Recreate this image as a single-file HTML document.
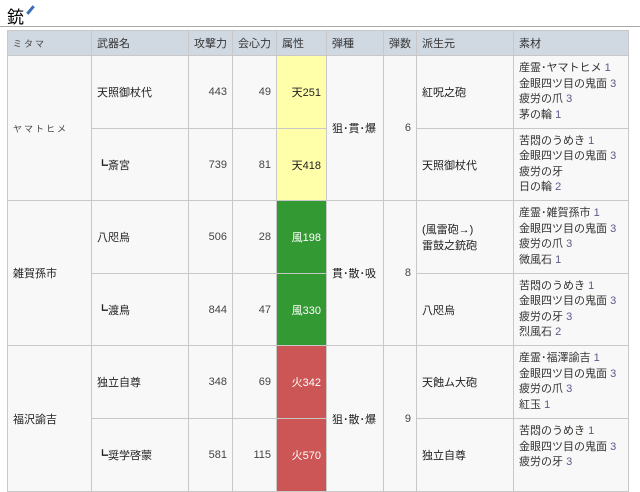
<!DOCTYPE html>
<html><head><meta charset="utf-8"><style>
body{margin:0;background:#fff;font-family:"Liberation Sans","Noto Sans CJK JP",sans-serif;color:#222;width:640px;height:492px;overflow:hidden;position:relative}
h2{position:absolute;left:7px;top:3px;margin:0;font-size:17px;font-weight:normal;color:#000}
.pen{position:absolute;left:29px;top:5px;width:3px;height:10px;background:#3a6fb5;transform:rotate(40deg)}
.hr{position:absolute;left:0;top:26px;width:640px;height:1px;background:#aaa}
table{position:absolute;left:7px;top:30px;border-collapse:collapse;table-layout:fixed;font-size:11px}
td,th{border:1px solid #c8c8c8;background:#f8f8f8;padding:0 5px;vertical-align:middle;overflow:hidden;white-space:nowrap}
th{background:#d0d8e2;font-weight:normal;text-align:left;height:24px;color:#333}
.n{text-align:right;color:#444}
.y{background:#ffffaa;text-align:right}
.g{background:#339933;color:#fff;text-align:right}
.r{background:#cc5555;color:#fff;text-align:right}
.m{line-height:15.5px;font-size:11px;color:#333}
.m b{font-weight:normal;color:#5a5a8a}
.s{font-size:9px;letter-spacing:2px;color:#444}
</style></head><body>
<h2>銃</h2><div class="pen"></div><div class="hr"></div>
<table>
<colgroup><col style="width:84px"><col style="width:97px"><col style="width:44px"><col style="width:44px"><col style="width:50px"><col style="width:57px"><col style="width:30px"><col style="width:97px"><col style="width:115px"></colgroup>
<tr><th class="s">ミタマ</th><th>武器名</th><th>攻撃力</th><th>会心力</th><th>属性</th><th>弾種</th><th>弾数</th><th>派生元</th><th>素材</th></tr>
<tr style="height:73px"><td rowspan="2" class="s">ヤマトヒメ</td><td>天照御杖代</td><td class="n">443</td><td class="n">49</td><td class="y">天251</td><td rowspan="2">狙･貫･爆</td><td rowspan="2" class="n">6</td><td>紅呪之砲</td><td class="m">産霊･ヤマトヒメ <b>1</b><br>金眼四ツ目の鬼面 <b>3</b><br>疲労の爪 <b>3</b><br>茅の輪 <b>1</b></td></tr>
<tr style="height:72px"><td>┗斎宮</td><td class="n">739</td><td class="n">81</td><td class="y">天418</td><td>天照御杖代</td><td class="m">苦悶のうめき <b>1</b><br>金眼四ツ目の鬼面 <b>3</b><br>疲労の牙<br>日の輪 <b>2</b></td></tr>
<tr style="height:73px"><td rowspan="2">雑賀孫市</td><td>八咫烏</td><td class="n">506</td><td class="n">28</td><td class="g">風198</td><td rowspan="2">貫･散･吸</td><td rowspan="2" class="n">8</td><td>(風雷砲→)<br>雷鼓之銃砲</td><td class="m">産霊･雑賀孫市 <b>1</b><br>金眼四ツ目の鬼面 <b>3</b><br>疲労の爪 <b>3</b><br>微風石 <b>1</b></td></tr>
<tr style="height:72px"><td>┗渡鳥</td><td class="n">844</td><td class="n">47</td><td class="g">風330</td><td>八咫烏</td><td class="m">苦悶のうめき <b>1</b><br>金眼四ツ目の鬼面 <b>3</b><br>疲労の牙 <b>3</b><br>烈風石 <b>2</b></td></tr>
<tr style="height:73px"><td rowspan="2">福沢諭吉</td><td>独立自尊</td><td class="n">348</td><td class="n">69</td><td class="r">火342</td><td rowspan="2">狙･散･爆</td><td rowspan="2" class="n">9</td><td>天蝕ム大砲</td><td class="m">産霊･福澤諭吉 <b>1</b><br>金眼四ツ目の鬼面 <b>3</b><br>疲労の爪 <b>3</b><br>紅玉 <b>1</b></td></tr>
<tr style="height:73px"><td>┗奨学啓蒙</td><td class="n">581</td><td class="n">115</td><td class="r">火570</td><td>独立自尊</td><td class="m">苦悶のうめき <b>1</b><br>金眼四ツ目の鬼面 <b>3</b><br>疲労の牙 <b>3</b><br>&nbsp;</td></tr>
</table>
</body></html>
